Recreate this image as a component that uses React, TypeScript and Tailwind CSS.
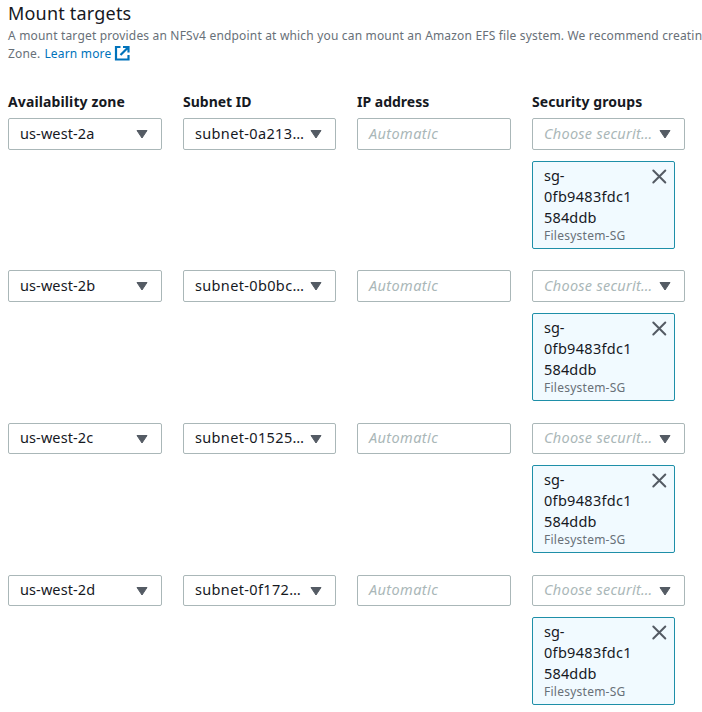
import React from "react";

const rows = [
  { zone: "us-west-2a", subnet: "subnet-0a213…", h: "h-[152px]", field: "h-8", shift: "-mt-[2px]" },
  { zone: "us-west-2b", subnet: "subnet-0b0bc…", h: "h-[152px]", field: "h-8", shift: "-mt-[2px]" },
  { zone: "us-west-2c", subnet: "subnet-01525…", h: "h-[152px]", field: "mt-px h-[31px]", shift: "-mt-[3px]" },
  { zone: "us-west-2d", subnet: "subnet-0f172…", h: "h-[142px]", field: "mt-px h-[31px]", shift: "-mt-[3px]" },
];

const columns = "grid grid-cols-[154px_153px_154px_153px] gap-x-[21px]";

function Caret() {
  return (
    <svg width="12" height="10" viewBox="0 0 12 10" className="shrink-0">
      <path d="M1 1.5h10L6 9z" fill="#545b64" stroke="#545b64" strokeWidth="1" strokeLinejoin="round" />
    </svg>
  );
}

function Select({ text, style, field }: { text: string; style: string; field: string }) {
  return (
    <div className={`flex items-center justify-between rounded-[2px] border border-[#aab7b8] bg-white pr-[13px] pl-[11px] ${field}`}>
      <span className={`text-[14.5px] leading-5 whitespace-nowrap ${style}`}>{text}</span>
      <Caret />
    </div>
  );
}

function Token() {
  return (
    <div className="mt-[11px] flex h-[88px] w-[143px] justify-between rounded-[2px] border border-[#1e8fa8] bg-[#f1faff] pt-[3px] pr-[7px] pl-[11px]">
      <div className="text-[14.5px] leading-[21px]">
        <div>sg-</div>
        <div className="tracking-[0.3px]">0fb9483fdc1</div>
        <div className="tracking-[0.15px]">584ddb</div>
        <div className="text-[12px] leading-[15px] tracking-[0.25px] whitespace-nowrap text-[#687078]">Filesystem-SG</div>
      </div>
      <svg width="16" height="16" viewBox="0 0 16 16" className="mt-[3px] shrink-0" fill="none" stroke="#545b64" strokeWidth="2" strokeLinecap="round">
        <path d="M2.3 2.5l12 12M14.3 2.5l-12 12" />
      </svg>
    </div>
  );
}

export default function App() {
  return (
    <main className="h-[712px] w-[702px] overflow-hidden bg-white pl-2 font-['Noto_Sans',sans-serif] text-[14px] text-[#16191f]">
      <h2 className="h-[27px] text-[18px] leading-[27px] tracking-[0.2px]">Mount targets</h2>
      <div className="h-[66px] text-[12px] leading-[18px] tracking-[0.175px] whitespace-nowrap text-[#687078]">
        <p>A mount target provides an NFSv4 endpoint at which you can mount an Amazon EFS file system. We recommend creatin</p>
        <p className="flex">
          <span>Zone.</span>
          <a className="ml-[4px] flex text-[#0073bb]">
            <span>Learn more</span>
            <svg width="16" height="16" viewBox="0 0 16 16" className="ml-[3px]" fill="none" stroke="#0073bb" strokeWidth="2.2">
              <path d="M6.5 2H2v12.5h12.5V10M9 2h5.5v5.5M14.5 2L6.5 10" />
            </svg>
          </a>
        </p>
      </div>
      <div className={`${columns} h-[25px] leading-[18px] font-bold`}>
        <div className="tracking-[0.12px]">Availability zone</div>
        <div>Subnet ID</div>
        <div>IP address</div>
        <div className="tracking-[0.08px]">Security groups</div>
      </div>
      {rows.map((row) => (
        <div key={row.zone} className={`${columns} ${row.h} items-start`}>
          <Select text={row.zone} field={row.field} style={`tracking-[0.1px] ${row.shift}`} />
          <Select text={row.subnet} field={row.field} style={`tracking-[0.35px] ${row.shift}`} />
          <div className={`flex items-center rounded-[2px] border border-[#aab7b8] pl-[11px] text-[#aab7b8] italic ${row.field}`}>
            <span className={`text-[14.5px] leading-5 tracking-[0.4px] ${row.shift}`}>Automatic</span>
          </div>
          <div>
            <Select text="Choose securit…" field={row.field} style={`text-[#aab7b8] italic tracking-[0.27px] ${row.shift}`} />
            <Token />
          </div>
        </div>
      ))}
    </main>
  );
}
